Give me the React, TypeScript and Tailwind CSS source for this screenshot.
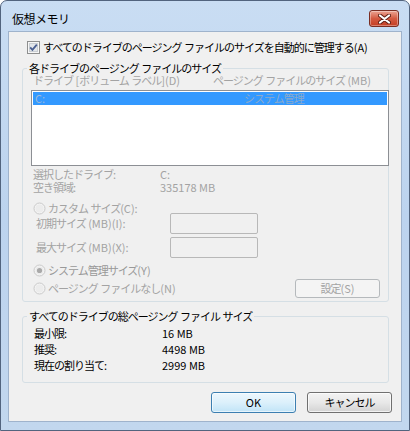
import React from 'react'

const dim = 'text-[#a3a3a3]'

// Latin runs keep normal spacing, Japanese runs are squeezed a little
function T({ children }: { children: string }) {
    const parts = children.match(/[\x20-\x7e]+|[^\x20-\x7e]+/g) ?? []
    return (
        <span>
            {parts.map((p, i) =>
                /^[\x20-\x7e]+$/.test(p) ? (
                    <span key={i} className="tracking-normal whitespace-pre">{p}</span>
                ) : (
                    <span key={i} className="tracking-[-1px]">{p}</span>
                )
            )}
        </span>
    )
}

function CheckBox() {
    return (
        <svg width="13" height="13" viewBox="0 0 13 13" className="shrink-0">
            <rect x="0.5" y="0.5" width="12" height="12" fill="#f6f6f6" stroke="#8e8f8f" />
            <rect x="2.5" y="2.5" width="8" height="8" fill="#e2e6ea" stroke="#c9ced3" />
            <path d="M3.2 6.4 L5.4 8.8 L9.8 3.6" stroke="#4a5f92" strokeWidth="1.8" fill="none" />
        </svg>
    )
}

function Radio({ checked = false }: { checked?: boolean }) {
    return (
        <svg width="13" height="13" viewBox="0 0 13 13" className="shrink-0">
            <circle cx="6.5" cy="6.5" r="5.5" fill="#f4f4f4" stroke="#cacaca" />
            <circle cx="6.5" cy="6.5" r="4" fill="#ececec" />
            {checked && <circle cx="6.5" cy="6.5" r="2.6" fill="#a9a9a9" />}
        </svg>
    )
}

function CloseButton() {
    return (
        <div className="w-[30px] h-[17px] rounded-[3px] border border-[#7a2d22] bg-gradient-to-b from-[#eba392] via-[#d45a41] to-[#c43d22] shadow-[inset_0_0_0_1px_rgba(255,255,255,0.35)] flex items-center justify-center">
            <svg width="13" height="10" viewBox="0 0 13 10">
                <path d="M2 1.5 L11 8.5 M11 1.5 L2 8.5" stroke="#5e1e14" strokeWidth="4" strokeLinecap="round" />
                <path d="M2 1.5 L11 8.5 M11 1.5 L2 8.5" stroke="#ffffff" strokeWidth="2.2" strokeLinecap="round" />
            </svg>
        </div>
    )
}

function Legend({ children }: { children: string }) {
    return (
        <div className="-mt-[7px] ml-[4px] w-fit px-[2px] bg-[#f0f0f0] h-[12px] leading-[12px] text-black">
            <T>{children}</T>
        </div>
    )
}

function Input() {
    return <div className="w-[88px] h-[21px] border border-[#b8b8b8] rounded-[2px] bg-[#f0f0f0]" />
}

export default function App() {
    return (
        <div className="w-[410px] h-[431px] font-['Noto_Sans_CJK_JP',sans-serif] text-[11px] text-black">
            <div className="w-[410px] h-[431px] rounded-t-[7px] border border-[#52647e] bg-gradient-to-b from-[#c9ddf3] via-[#bcd3ee] to-[#c2d7ee] flex flex-col">
                {/* title bar */}
                <div className="h-[30px] flex items-start shrink-0">
                    <div className="pl-[11px] pt-[10px] text-[12px] tracking-[-0.5px] leading-[16px]">仮想メモリ</div>
                    <div className="ml-auto mr-[10px] mt-[9px]">
                        <CloseButton />
                    </div>
                </div>

                {/* client */}
                <div className="mx-[7px] h-[391px] border border-[#9fb3cc] bg-[#f0f0f0] flex flex-col">
                    <div className="mt-[9px] ml-[18px] h-[13px] flex items-center gap-[3px] leading-[13px]">
                        <CheckBox />
                        <T>すべてのドライブのページング ファイルのサイズを自動的に管理する(A)</T>
                    </div>

                    {/* group 1 */}
                    <div className="mt-[14px] ml-[13px] mr-[12px] border border-[#d5dfe5] rounded-[3px] pb-[3px] flex flex-col">
                        <Legend>各ドライブのページング ファイルのサイズ</Legend>
                        <div className={`h-[12px] leading-[12px] pl-[10px] flex ${dim}`}>
                            <span className="w-[180px]"><T>ドライブ [ボリューム ラベル](D)</T></span>
                            <T>ページング ファイルのサイズ (MB)</T>
                        </div>
                        <div className="mt-[4px] ml-[8px] -mr-[1px] h-[76px] border border-[#8c8f94] bg-white pt-[1px] px-[1px]">
                            <div className="h-[13px] bg-[#3399ff] flex leading-[13px] text-[#9bb8d8]">
                                <span className="w-[211px] pl-[2px]">C:</span>
                                <span className="tracking-[-1px] text-[#8aa9cc]">システム管理</span>
                            </div>
                        </div>

                        <div className={`mt-[2px] pl-[10px] h-[13px] leading-[13px] flex ${dim}`}>
                            <span className="w-[127px]"><T>選択したドライブ:</T></span>
                            <span>C:</span>
                        </div>
                        <div className={`pl-[10px] h-[12px] leading-[12px] flex ${dim}`}>
                            <span className="w-[127px]"><T>空き領域:</T></span>
                            <span>335178 MB</span>
                        </div>

                        <div className={`mt-[8px] pl-[10px] h-[14px] flex items-center gap-[2px] ${dim}`}>
                            <Radio />
                            <T>カスタム サイズ(C):</T>
                        </div>
                        <div className={`-mt-[2px] pl-[13px] h-[21px] flex items-center ${dim}`}>
                            <span className="w-[134px]"><T>初期サイズ (MB)(I):</T></span>
                            <Input />
                        </div>
                        <div className={`mt-[3px] pl-[13px] h-[21px] flex items-center ${dim}`}>
                            <span className="w-[134px]"><T>最大サイズ (MB)(X):</T></span>
                            <Input />
                        </div>

                        <div className="mt-[5px] pl-[10px] h-[14px] flex items-center gap-[2px] text-[#999999]">
                            <Radio checked />
                            <T>システム管理サイズ(Y)</T>
                        </div>
                        <div className={`mt-[2px] pl-[10px] h-[19px] flex items-center gap-[2px] ${dim}`}>
                            <Radio />
                            <T>ページング ファイルなし(N)</T>
                            <div className="ml-auto mr-[8px] w-[85px] h-[19px] border border-[#b5b9bc] rounded-[3px] bg-[#f4f4f4] flex items-center justify-center">
                                <T>設定(S)</T>
                            </div>
                        </div>
                    </div>

                    {/* group 2 */}
                    <div className="mt-[14px] ml-[13px] mr-[12px] border border-[#d5dfe5] rounded-[3px] pb-[8px] flex flex-col">
                        <Legend>すべてのドライブの総ページング ファイル サイズ</Legend>
                        <div className="mt-[3px] pl-[11px] h-[16px] leading-[16px] flex">
                            <span className="w-[128px]"><T>最小限:</T></span>
                            <span>16 MB</span>
                        </div>
                        <div className="pl-[11px] h-[16px] leading-[16px] flex">
                            <span className="w-[128px]"><T>推奨:</T></span>
                            <span>4498 MB</span>
                        </div>
                        <div className="pl-[11px] h-[17px] leading-[17px] flex">
                            <span className="w-[128px]"><T>現在の割り当て:</T></span>
                            <span>2999 MB</span>
                        </div>
                    </div>

                    {/* buttons */}
                    <div className="mt-[9px] pr-[9px] flex justify-end gap-[11px]">
                        <button className="w-[85px] h-[21px] rounded-[3px] border border-[#3c7fb1] bg-gradient-to-b from-[#edf7fd] via-[#dcf0fb] to-[#c1e4f7] shadow-[inset_0_0_0_1px_rgba(255,255,255,0.6)] flex items-center justify-center">
                            OK
                        </button>
                        <button className="w-[85px] h-[21px] rounded-[3px] border border-[#707070] bg-gradient-to-b from-[#f3f3f3] via-[#e8e8e8] to-[#d3d3d3] shadow-[inset_0_0_0_1px_rgba(255,255,255,0.7)] flex items-center justify-center">
                            <T>キャンセル</T>
                        </button>
                    </div>
                </div>
            </div>
        </div>
    )
}
